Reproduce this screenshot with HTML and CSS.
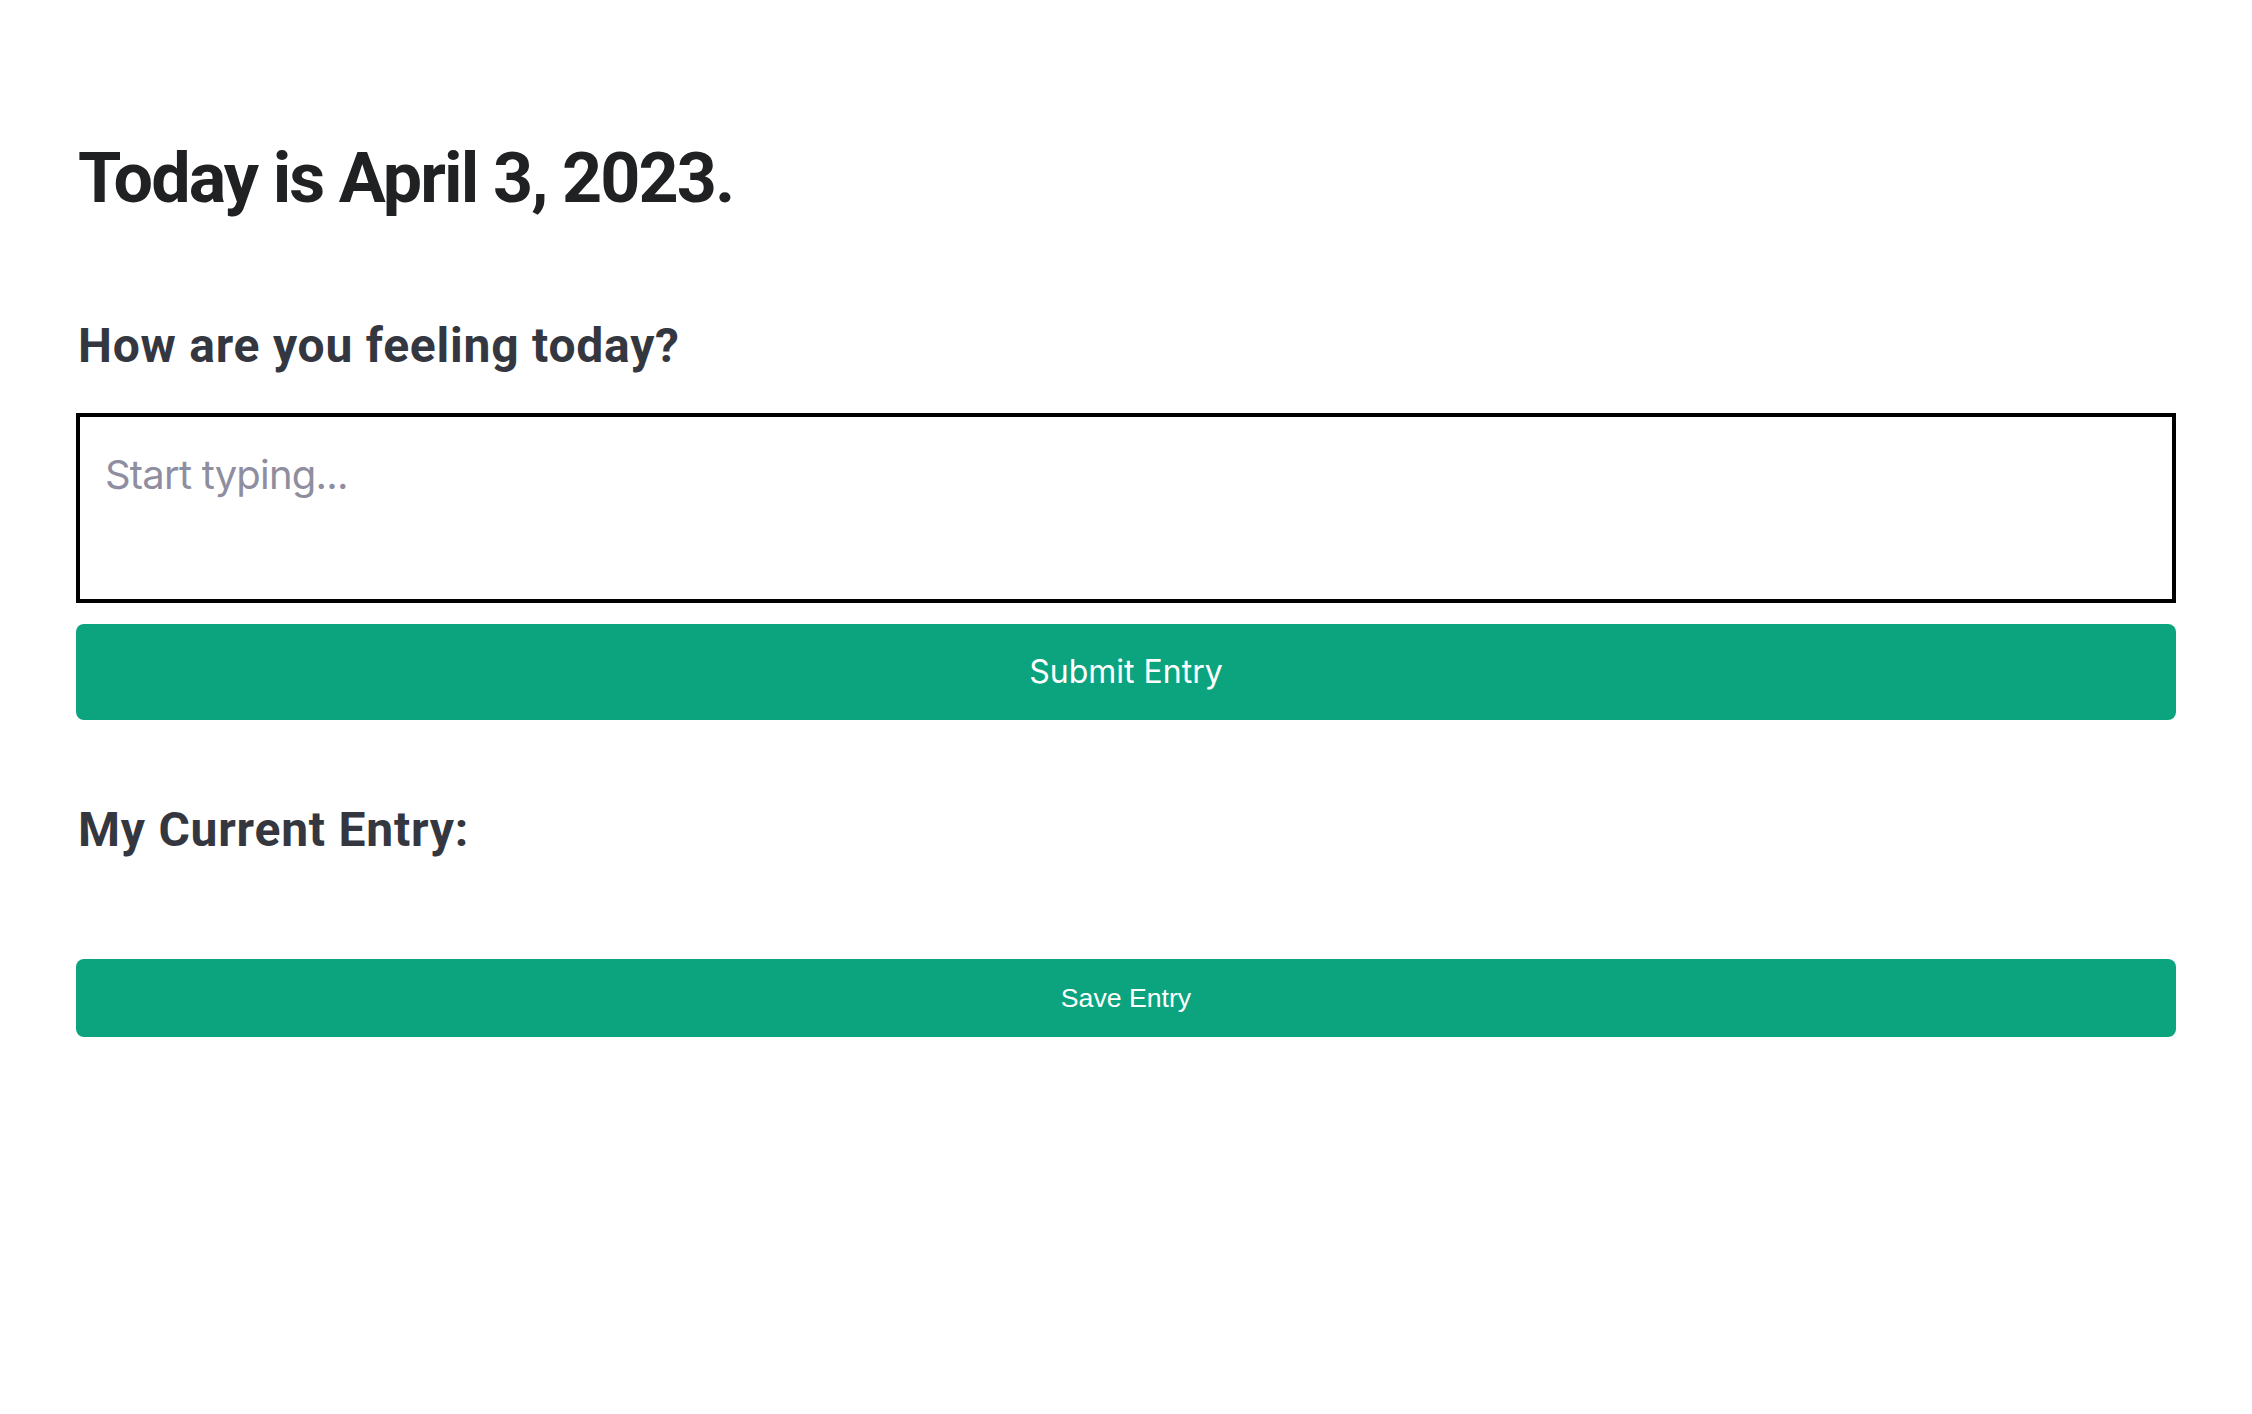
FILE: index.html
```html
<!DOCTYPE html>
<html lang="en">
<head>
<meta charset="utf-8">
<title>Journal</title>
<link rel="stylesheet" href="styles.css">
</head>
<body>
<main class="page">
  <h1 class="title">Today is April 3, 2023.</h1>
  <h2 class="subtitle prompt">How are you feeling today?</h2>
  <textarea class="entry-input" placeholder="Start typing..."></textarea>
  <button class="btn btn-submit" type="button">Submit Entry</button>
  <h2 class="subtitle current">My Current Entry:</h2>
  <div class="entry-text"></div>
  <button class="btn btn-save" type="button">Save Entry</button>
</main>
</body>
</html>
```

FILE: styles.css
```css
html, body {
  margin: 0;
  padding: 0;
  background: #ffffff;
}

.page {
  display: flex;
  flex-direction: column;
  padding: 136px 76px 0 76px;
  font-family: Roboto, "Liberation Sans", sans-serif;
}

.title {
  margin: 0;
  font-family: Roboto, "Liberation Sans", sans-serif;
  font-weight: 700;
  font-size: 70px;
  line-height: 84px;
  letter-spacing: -0.027em;
  color: #202123;
  padding-left: 2px;
}

.subtitle {
  margin: 0;
  font-family: Roboto, "Liberation Sans", sans-serif;
  font-weight: 700;
  font-size: 48px;
  line-height: 58px;
  letter-spacing: 0.016em;
  color: #353740;
  padding-left: 2px;
}

.prompt {
  margin-top: 97px;
}

.entry-input {
  margin-top: 38px;
  box-sizing: border-box;
  width: 100%;
  height: 190px;
  border: 4px solid #000000;
  border-radius: 0;
  padding: 30px 25px 18px 25px;
  font-family: Inter, "Noto Sans", sans-serif;
  font-size: 40px;
  line-height: 56px;
  letter-spacing: -0.02em;
  color: #202123;
  resize: none;
  outline: none;
  display: block;
}

.entry-input::placeholder {
  color: #8e8ea0;
}

.btn {
  display: block;
  width: 100%;
  border: none;
  border-radius: 8px;
  background: #0ba47f;
  color: #ffffff;
  cursor: pointer;
  text-align: center;
}

.btn-submit {
  margin-top: 21px;
  height: 96px;
  padding: 0 24px;
  font-family: Inter, "Noto Sans", sans-serif;
  font-size: 32px;
  line-height: 48px;
}

.current {
  margin-top: 81px;
}

.entry-text {
  height: 100px;
}

.btn-save {
  height: 78px;
  padding: 0 24px;
  font-family: Arial, "Liberation Sans", sans-serif;
  font-size: 26.67px;
  line-height: 30px;
}
```
